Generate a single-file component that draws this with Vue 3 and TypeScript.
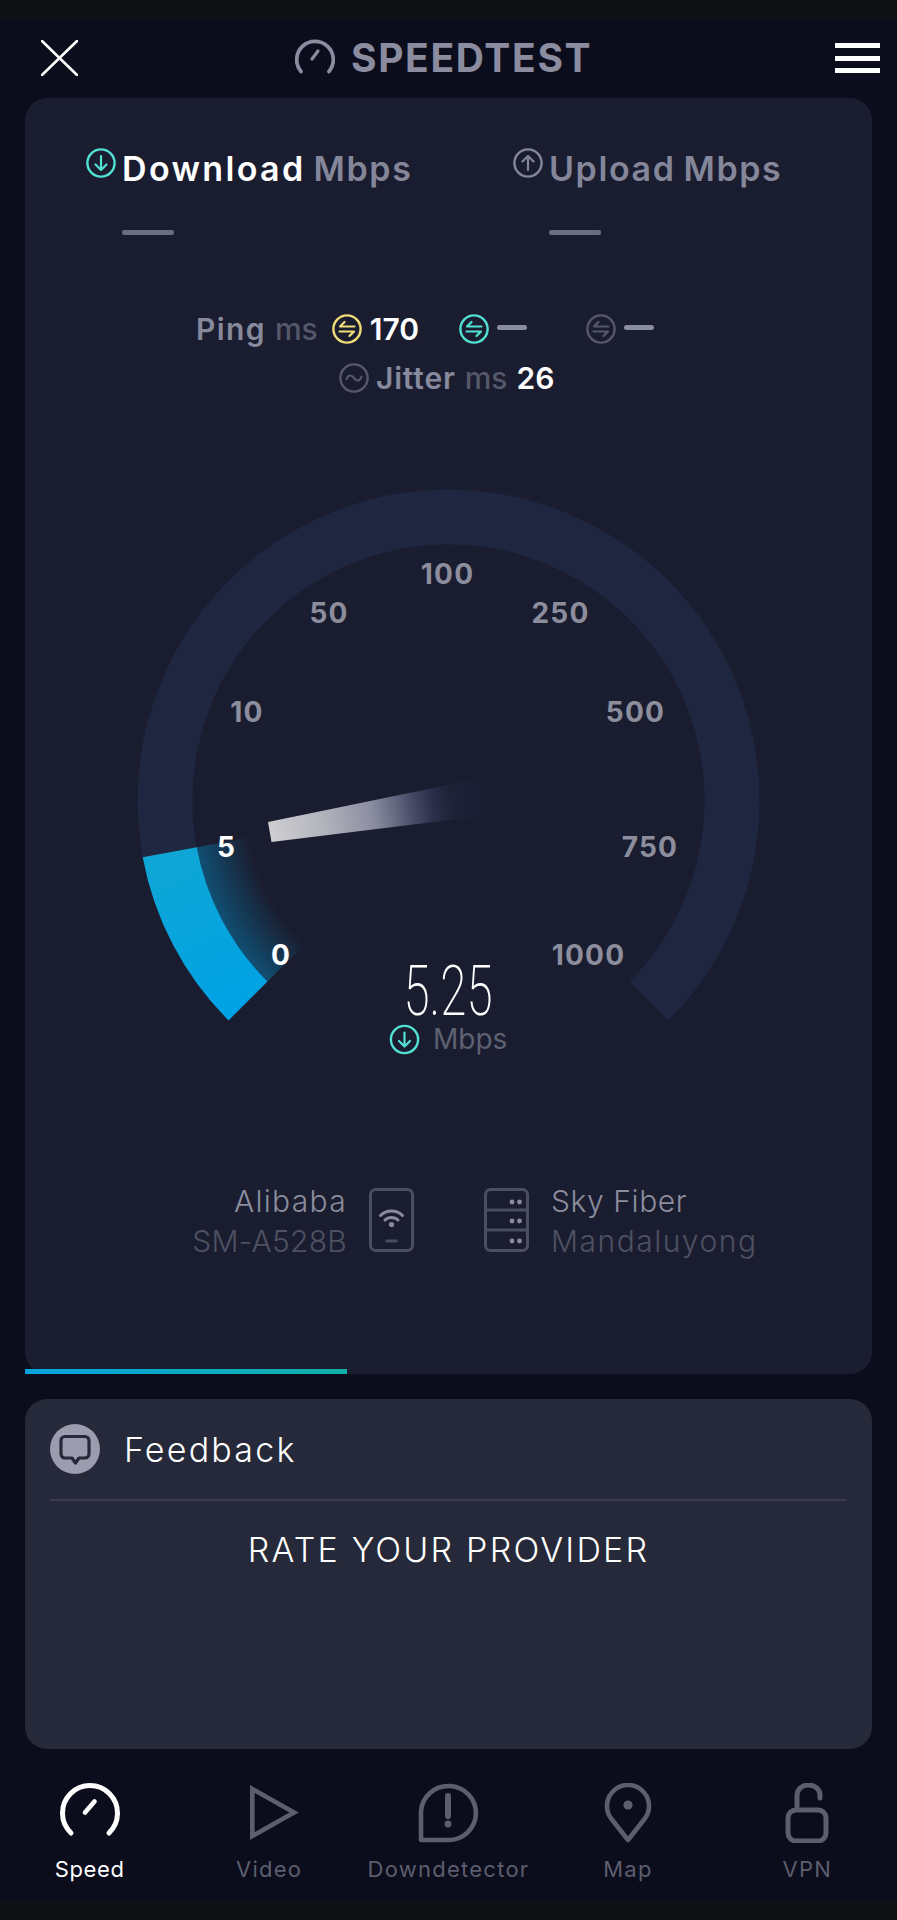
<script setup lang="ts">
interface Tick { t: string; x: number; y: number; on?: boolean }
const ticks: Tick[] = [
  { t: '100', x: 447.5, y: 584 },
  { t: '50', x: 329, y: 622.5 },
  { t: '250', x: 560.5, y: 622.5 },
  { t: '10', x: 247, y: 722 },
  { t: '500', x: 635.5, y: 722 },
  { t: '5', x: 226.5, y: 857, on: true },
  { t: '750', x: 650, y: 857 },
  { t: '0', x: 281, y: 965, on: true },
  { t: '1000', x: 588.5, y: 965 },
]
const navItems = ['Speed', 'Video', 'Downdetector', 'Map', 'VPN']
</script>

<template>
  <div class="app">
    <div class="strip"></div>
    <header class="top">
      <svg class="close" width="37" height="36" viewBox="0 0 37 36">
        <path d="M1 1L36 35M36 1L1 35" stroke="#fff" stroke-width="2.6" fill="none" stroke-linecap="round" />
      </svg>
      <div class="brand">
        <svg class="brand-ico" width="40" height="36" viewBox="0 0 40 36">
          <path d="M6 33.5A18.3 18.3 0 1 1 34 33.5" stroke="#8b8c9f" stroke-width="3.8" fill="none" stroke-linecap="round" />
          <path d="M17 21L23 13" stroke="#8b8c9f" stroke-width="3.2" stroke-linecap="round" />
        </svg>
        <span class="brand-text">SPEEDTEST</span>
      </div>
      <div class="burger"><i></i><i></i><i></i></div>
    </header>

    <section class="card main">
      <div class="tabs">
        <div class="tab">
          <svg class="ci" width="30" height="30" viewBox="0 0 30 30">
            <circle cx="15" cy="15" r="13.6" stroke="#52e0d3" stroke-width="2.4" fill="none" />
            <path d="M15 8V22M9.5 16.5L15 22L20.5 16.5" stroke="#52e0d3" stroke-width="2.2" fill="none" stroke-linecap="round" stroke-linejoin="round" />
          </svg>
          <div class="tab-body">
            <div class="tab-label"><b class="white">Download</b><span>Mbps</span></div>
            <div class="dash"></div>
          </div>
        </div>
        <div class="tab">
          <svg class="ci" width="30" height="30" viewBox="0 0 30 30">
            <circle cx="15" cy="15" r="13.6" stroke="#84869a" stroke-width="2.4" fill="none" />
            <path d="M15 22V8M9.5 13.5L15 8L20.5 13.5" stroke="#84869a" stroke-width="2.2" fill="none" stroke-linecap="round" stroke-linejoin="round" />
          </svg>
          <div class="tab-body">
            <div class="tab-label"><b>Upload</b><span>Mbps</span></div>
            <div class="dash"></div>
          </div>
        </div>
      </div>

      <div class="stats">
        <div class="row row-ping">
          <span class="s-name">Ping</span>
          <span class="s-unit">ms</span>
          <svg class="sico first" width="30" height="30" viewBox="0 0 30 30">
            <circle cx="15" cy="15" r="13.6" stroke="#f0dc78" stroke-width="2.4" fill="none" />
            <path d="M22.5 12.5H8L12.5 8M7.5 17.5H22L17.5 22" stroke="#f0dc78" stroke-width="2.2" fill="none" stroke-linecap="round" stroke-linejoin="round" />
          </svg>
          <span class="s-val">170</span>
          <svg class="sico second" width="30" height="30" viewBox="0 0 30 30">
            <circle cx="15" cy="15" r="13.6" stroke="#52e0d3" stroke-width="2.4" fill="none" />
            <path d="M22.5 12.5H8L12.5 8M7.5 17.5H22L17.5 22" stroke="#52e0d3" stroke-width="2.2" fill="none" stroke-linecap="round" stroke-linejoin="round" />
          </svg>
          <span class="s-dash"></span>
          <svg class="sico third" width="30" height="30" viewBox="0 0 30 30">
            <circle cx="15" cy="15" r="13.6" stroke="#555868" stroke-width="2.4" fill="none" />
            <path d="M22.5 12.5H8L12.5 8M7.5 17.5H22L17.5 22" stroke="#555868" stroke-width="2.2" fill="none" stroke-linecap="round" stroke-linejoin="round" />
          </svg>
          <span class="s-dash"></span>
        </div>
        <div class="row row-jitter">
          <svg width="30" height="30" viewBox="0 0 30 30">
            <circle cx="15" cy="15" r="13.6" stroke="#555868" stroke-width="2.4" fill="none" />
            <path d="M7.5 16C9.5 11.5 12.5 11.5 15 15S20.5 18.5 22.5 14" stroke="#555868" stroke-width="2.2" fill="none" stroke-linecap="round" />
          </svg>
          <span class="s-name j">Jitter</span>
          <span class="s-unit">ms</span>
          <span class="s-val j2">26</span>
        </div>
      </div>

      <svg class="gauge" width="847" height="590" viewBox="25 480 847 590">
        <defs>
          <radialGradient id="glow" gradientUnits="userSpaceOnUse" cx="448.5" cy="800.5" r="257">
            <stop offset="0.79" stop-color="#00a2e5" stop-opacity="0" />
            <stop offset="1" stop-color="#00a2e5" stop-opacity="0.38" />
          </radialGradient>
          <linearGradient id="needle" gradientUnits="userSpaceOnUse" x1="268" y1="832" x2="482" y2="797">
            <stop offset="0" stop-color="#cfcfd3" />
            <stop offset="0.25" stop-color="#b4b5bd" />
            <stop offset="0.49" stop-color="#8a8da0" />
            <stop offset="0.67" stop-color="#4a4d68" />
            <stop offset="0.77" stop-color="#2a2e48" />
            <stop offset="0.86" stop-color="#1e2236" />
            <stop offset="1" stop-color="#1b1e32" />
          </linearGradient>
          <linearGradient id="blue" gradientUnits="userSpaceOnUse" x1="170" y1="850" x2="250" y2="1010">
            <stop offset="0" stop-color="#0ea6d4" />
            <stop offset="1" stop-color="#00a2e6" />
          </linearGradient>
        </defs>
        <path d="M248 1001A283.5 283.5 0 1 1 649 1001" stroke="#1e2640" stroke-width="55" fill="none" />
        <path d="M288.7 960.3A226 226 0 0 1 226.3 841.7" stroke="url(#glow)" stroke-width="60" fill="none" />
        <path d="M248 1001A283.5 283.5 0 0 1 169.75 852.16" stroke="url(#blue)" stroke-width="55" fill="none" />
        <polygon points="268,822 271.5,842 482,816 482,778" fill="url(#needle)" />
        <text
          v-for="k in ticks"
          :key="k.t"
          :x="k.x"
          :y="k.y"
          text-anchor="middle"
          class="tick"
          :class="{ on: k.on }"
        >{{ k.t }}</text>
        <text class="reading" x="403.5" y="1015" textLength="89" lengthAdjust="spacingAndGlyphs">5.25</text>
        <g transform="translate(389.5 1024.5)">
          <circle cx="15" cy="15" r="13.6" stroke="#52e0d3" stroke-width="2.4" fill="none" />
          <path d="M15 8V22M9.5 16.5L15 22L20.5 16.5" stroke="#52e0d3" stroke-width="2.2" fill="none" stroke-linecap="round" stroke-linejoin="round" />
        </g>
        <text class="unit" x="433" y="1049">Mbps</text>
      </svg>

      <div class="conn">
        <div class="conn-side left">
          <div class="conn-text right">
            <div class="l1 a">Alibaba</div>
            <div class="l2 b">SM-A528B</div>
          </div>
          <svg width="45" height="64" viewBox="0 0 45 64">
            <rect x="1.5" y="1.5" width="42" height="61" rx="5" stroke="#4b4e60" stroke-width="3" fill="none" />
            <path d="M11.5 27.5C17.5 21.5 27.5 21.5 33.5 27.5M16 32C19.5 28.5 25.5 28.5 29 32" stroke="#8a8c9d" stroke-width="3" fill="none" stroke-linecap="round" />
            <circle cx="22.5" cy="36.5" r="2.6" fill="#8a8c9d" />
            <path d="M16.5 53H28.5" stroke="#4b4e60" stroke-width="3" />
          </svg>
        </div>
        <div class="conn-side right-side">
          <svg width="45" height="64" viewBox="0 0 45 64">
            <rect x="1.5" y="1.5" width="42" height="61" rx="5" stroke="#4b4e60" stroke-width="3" fill="none" />
            <path d="M1.5 22H43.5M1.5 42H43.5" stroke="#4b4e60" stroke-width="3" />
            <circle cx="28" cy="14" r="2.4" fill="#8a8c9d" />
            <circle cx="35.5" cy="14" r="2.4" fill="#8a8c9d" />
            <circle cx="28" cy="33" r="2.4" fill="#8a8c9d" />
            <circle cx="35.5" cy="33" r="2.4" fill="#8a8c9d" />
            <circle cx="28" cy="53" r="2.4" fill="#8a8c9d" />
            <circle cx="35.5" cy="53" r="2.4" fill="#8a8c9d" />
          </svg>
          <div class="conn-text">
            <div class="l1 c">Sky Fiber</div>
            <div class="l2 d">Mandaluyong</div>
          </div>
        </div>
      </div>
      <div class="progress"></div>
    </section>

    <section class="card feedback">
      <div class="fb-head">
        <svg width="50" height="50" viewBox="0 0 50 50">
          <circle cx="25" cy="25" r="25" fill="#9b9cae" />
          <path d="M15 12.5H35A4 4 0 0 1 39 16.5V30A4 4 0 0 1 35 34H29L25.5 39L22 34H15A4 4 0 0 1 11 30V16.5A4 4 0 0 1 15 12.5Z" fill="none" stroke="#262939" stroke-width="3.2" stroke-linejoin="round" />
        </svg>
        <span>Feedback</span>
      </div>
      <div class="fb-title">RATE YOUR PROVIDER</div>
    </section>

    <nav class="nav">
      <div v-for="(n, i) in navItems" :key="n" class="nav-item" :class="{ active: i === 0 }">
        <svg width="70" height="60" viewBox="0 0 70 60" class="nav-ico">
          <g v-if="i === 0">
            <path d="M16 50A27.5 27.5 0 1 1 54 50" stroke="#fff" stroke-width="5" fill="none" stroke-linecap="round" />
            <path d="M30 29.5L39.5 18.5" stroke="#fff" stroke-width="4.6" stroke-linecap="round" />
          </g>
          <path v-else-if="i === 1" d="M18.3 6L60 29.5L18.3 53Z" stroke="#5c5e6e" stroke-width="4.6" fill="none" />
          <g v-else-if="i === 2">
            <path d="M8 57V28A27.5 27 0 1 1 35 57Z" stroke="#5c5e6e" stroke-width="4.6" fill="none" stroke-linejoin="round" />
            <path d="M35 13V33" stroke="#5c5e6e" stroke-width="6" stroke-linecap="round" />
            <circle cx="35" cy="41" r="3.4" fill="#5c5e6e" />
          </g>
          <g v-else-if="i === 3">
            <path d="M35 57L18.5 36A21 21 0 1 1 51.5 36Z" stroke="#5c5e6e" stroke-width="4.6" fill="none" stroke-linejoin="round" />
            <circle cx="35" cy="22" r="4.6" fill="#5c5e6e" />
          </g>
          <g v-else>
            <rect x="16" y="27" width="38" height="31" rx="8" stroke="#5c5e6e" stroke-width="5" fill="none" />
            <path d="M25 26V12A11.5 10 0 0 1 48 12V15" stroke="#5c5e6e" stroke-width="5" fill="none" stroke-linecap="round" />
          </g>
        </svg>
        <span>{{ n }}</span>
      </div>
    </nav>
    <div class="strip bottom"></div>
  </div>
</template>

<style scoped>
.app {
  width: 897px;
  height: 1920px;
  overflow: hidden;
  background: #0b0c1c;
  font-family: Inter, "Liberation Sans", sans-serif;
  color: #84869a;
  display: flex;
  flex-direction: column;
}
.strip { height: 20px; background: #0e1013; flex: none; }
.strip.bottom { height: 19px; }
.top {
  height: 78px;
  box-sizing: border-box;
  flex: none;
  display: flex;
  align-items: center;
  padding: 0 0 2px 41px;
}
.close { flex: none; }
.brand {
  margin-left: 217px;
  display: flex;
  align-items: center;
  gap: 16px;
  width: 293px;
  flex: none;
}
.brand-ico { flex: none; margin-bottom: 5px; }
.brand-text {
  font-size: 39px;
  font-weight: 700;
  color: #8b8c9f;
  line-height: 40px;
  letter-spacing: 1.65px;
}
.burger {
  margin-left: 247px;
  width: 45px;
  flex: none;
  display: flex;
  flex-direction: column;
  gap: 7.5px;
}
.burger i { display: block; height: 5px; background: #fff; }

.card { margin: 0 25px; flex: none; border-radius: 22px; position: relative; }
.main { height: 1276px; background: #1a1d2f; padding-top: 50px; box-sizing: border-box; }

.tabs { display: flex; padding-left: 61px; }
.tab { width: 427px; flex: none; display: flex; gap: 6px; }
.ci { flex: none; }
.tab-label {
  margin-top: 1px;
  font-size: 34px;
  line-height: 40px;
  font-weight: 600;
  white-space: nowrap;
  display: flex;
  gap: 8px;
  letter-spacing: 1.6px;
}
.tab-label b { font-weight: 600; }
.tab-label b.white { color: #fff; letter-spacing: 2.35px; }
.dash { width: 52px; height: 5px; border-radius: 2px; background: #6b6d80; margin-top: 41px; }

.stats { margin-top: 69.5px; }
.row { display: flex; align-items: center; height: 49px; white-space: nowrap; }
.row-ping { padding-left: 171px; }
.row-jitter { padding-left: 314px; }
.s-name { font-size: 30px; font-weight: 600; color: #87899d; letter-spacing: 1.4px; }
.s-unit { font-size: 30px; font-weight: 500; color: #555868; margin-left: 9px; }
.s-val { font-size: 30px; font-weight: 600; color: #fff; margin-left: 8px; }
.s-name.j { margin-left: 7px; letter-spacing: 0.8px; }
.s-val.j2 { margin-left: 9px; }
.sico.first { margin-left: 14px; }
.sico.second { margin-left: 40px; }
.sico.third { margin-left: 59px; }
.s-dash { width: 30px; height: 5px; border-radius: 3px; background: #8a8c9f; margin: -4px 0 0 8px; }

.gauge { display: block; margin-top: 77.5px; }
.tick { font-size: 28px; font-weight: 700; fill: #8c8d9d; font-family: Inter, sans-serif; letter-spacing: 1.2px; }
.tick.on { fill: #fff; }
.reading { font-family: Roboto, sans-serif; font-weight: 200; font-size: 71px; fill: #fff; }
.unit { font-size: 28px; font-weight: 400; fill: #5e6172; font-family: Inter, sans-serif; }

.conn { display: flex; margin-top: 117.7px; gap: 70px; }
.conn-side { display: flex; gap: 22px; }
.conn-side.left { width: 389px; justify-content: flex-end; flex: none; }
.conn-text { white-space: nowrap; }
.conn-text.right { text-align: right; }
.l1, .l2 { font-size: 30px; line-height: 40px; font-weight: 300; }
.l1 { color: #8b8d9e; margin-top: -6.5px; }
.l2 { color: #4e5162; }
.a { letter-spacing: 1.3px; }
.b { letter-spacing: 0.25px; }
.c { letter-spacing: 0.6px; }
.d { letter-spacing: 1.5px; }

.progress {
  position: absolute;
  left: 0;
  bottom: 0;
  width: 322px;
  height: 5px;
  background: linear-gradient(90deg, #0aa3e0, #0fb0a8);
}

.feedback {
  margin-top: 25px;
  height: 350px;
  background: #262939;
  padding: 25px 25px 0;
  box-sizing: border-box;
}
.fb-head {
  display: flex;
  align-items: center;
  gap: 24px;
  padding-bottom: 25px;
  border-bottom: 2px solid #3a3c4d;
  color: #fff;
  font-size: 34px;
  letter-spacing: 2.2px;
  font-weight: 350;
  height: 50px;
  box-sizing: content-box;
}
.fb-title {
  margin-top: 28.6px;
  text-align: center;
  color: #fff;
  font-size: 34px;
  letter-spacing: 2.2px;
  line-height: 40px;
  font-weight: 350;
}

.nav {
  flex: 1;
  display: grid;
  grid-template-columns: repeat(5, 1fr);
  padding-top: 34px;
  box-sizing: border-box;
}
.nav-item {
  display: flex;
  flex-direction: column;
  align-items: center;
  color: #5c5e6e;
  font-size: 22px;
  letter-spacing: 1.25px;
  line-height: 28px;
  font-weight: 400;
}
.nav-item.active { color: #fff; letter-spacing: 0.6px; }
.nav-ico { display: block; margin-bottom: 12px; }
</style>
